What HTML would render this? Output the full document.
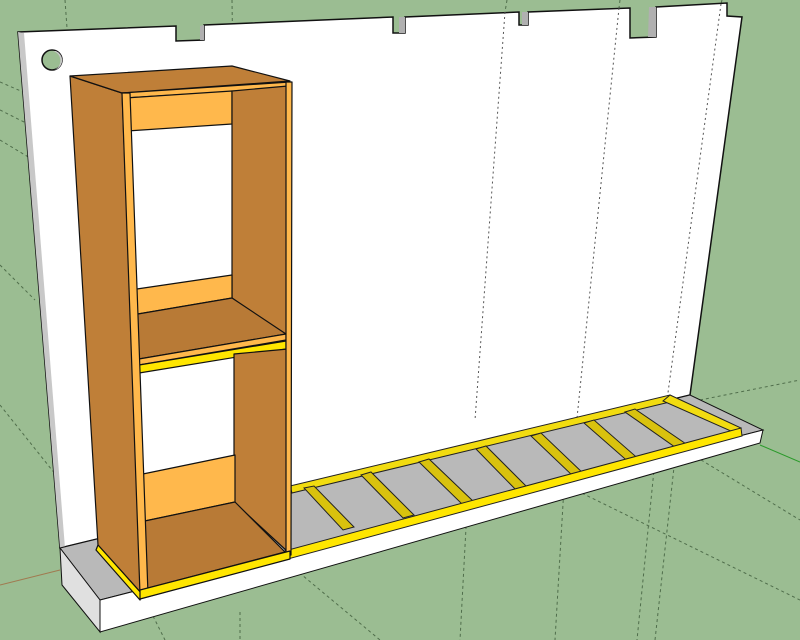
<!DOCTYPE html>
<html><head><meta charset="utf-8"><style>html,body{margin:0;padding:0;background:#9bbd92;}svg{display:block}</style></head>
<body>
<svg width="800" height="640" viewBox="0 0 800 640" xmlns="http://www.w3.org/2000/svg">
<rect width="800" height="640" fill="#9bbd92"/>
<g stroke="#3d5a3a" stroke-width="1" stroke-dasharray="3,3" fill="none" opacity="0.8">
<line x1="65" y1="0" x2="70" y2="70"/>
<line x1="232" y1="0" x2="233" y2="70"/>
<line x1="0" y1="82" x2="30" y2="95"/>
<line x1="0" y1="110" x2="30" y2="125"/>
<line x1="0" y1="140" x2="30" y2="158"/>
<line x1="0" y1="265" x2="35" y2="300"/>
<line x1="0" y1="405" x2="60" y2="480"/>
<line x1="145" y1="600" x2="165" y2="640"/>
<line x1="240" y1="612" x2="240" y2="640"/>
<line x1="290" y1="565" x2="380" y2="640"/>
<line x1="468" y1="490" x2="460" y2="640"/>
<line x1="565" y1="470" x2="555" y2="640"/>
<line x1="655" y1="460" x2="637" y2="640"/>
<line x1="675" y1="458" x2="655" y2="640"/>
<line x1="555" y1="480" x2="800" y2="600"/>
<line x1="660" y1="435" x2="800" y2="520"/>
<line x1="700" y1="400" x2="800" y2="380"/>
<line x1="507" y1="0" x2="505" y2="12"/>
<line x1="620" y1="0" x2="619" y2="8"/>
<line x1="722" y1="0" x2="721" y2="4"/>
</g>
<line x1="0" y1="585" x2="60" y2="570" stroke="#a07a50" stroke-width="1"/>
<line x1="760" y1="445" x2="800" y2="462" stroke="#2a9a2a" stroke-width="1"/>
<!-- wall -->
<polygon points="18,32 176,26 176,41 204,40 204,25 393,17 393,33 405,33 405,17 519,12 519,25 528,25 528,12 630,8 630,38 656,37 656,7 727,3 727,16 742,17 690,395 60,548" fill="#ffffff" stroke="#111" stroke-width="1.5"/>
<polygon points="18,32 24,33 65,548 60,548" fill="#c8c8c8"/>
<polygon points="200,26 204,25 204,40 200,40" fill="#b0b0b0"/>
<polygon points="399,17 405,17 405,33 399,33" fill="#b0b0b0"/>
<polygon points="522,12 528,12 528,25 522,25" fill="#b0b0b0"/>
<polygon points="649,7 656,7 656,37 648,37" fill="#b0b0b0"/>
<g stroke="#555" stroke-width="1" stroke-dasharray="2,3" fill="none">
<line x1="505" y1="12" x2="475" y2="420"/>
<line x1="619" y1="8" x2="577" y2="418"/>
<line x1="721" y1="4" x2="667" y2="400"/>
</g>
<circle cx="52" cy="60" r="10" fill="#9bbd92" stroke="#111" stroke-width="1.5"/>
<path d="M56,51 A10,10 0 0 1 57,69 L54,70 A10,10 0 0 0 53,51 Z" fill="#c8c8c8"/>
<!-- base -->
<polygon points="60,548 690,395 763,430 100,600" fill="#b9b9b9" stroke="#111" stroke-width="1"/>
<polygon points="100,600 763,430 760,443 100,632" fill="#ffffff" stroke="#111" stroke-width="1"/>
<polygon points="60,548 100,600 100,632 62,585" fill="#e0e0e0" stroke="#111" stroke-width="1"/>
<!-- ladder -->
<g stroke="#222" stroke-width="1" fill="#f2dc10">
<polygon points="290,486 670,395 678,400 292,493"/>
<polygon points="670,395 741,428 733,432 663,401"/>
<polygon points="304,488 314,486 354,527 343,530" fill="#d9c20e"/>
<polygon points="361,475 371,472 414,515 403,518" fill="#d9c20e"/>
<polygon points="419,462 429,459 474,502 463,505" fill="#d9c20e"/>
<polygon points="476,449 486,446 529,489 518,492" fill="#d9c20e"/>
<polygon points="531,436 541,433 585,475 575,478" fill="#d9c20e"/>
<polygon points="584,423 594,420 642,462 632,465" fill="#d9c20e"/>
<polygon points="625,412 635,409 692,448 682,452" fill="#d9c20e"/>
<polygon points="140,590 741,428 742,436 140,599" fill="#ffe600"/>
</g>
<!-- cabinet -->
<g stroke="#111" stroke-width="1.2" stroke-linejoin="round">
<polygon points="70,76 122,93 142,594 98,545" fill="#bf7f38"/>
<polygon points="70,76 232,66 290,81 122,93" fill="#bf7f38"/>
<polygon points="122,93 290,82 290,88 124,98" fill="#ffb84c"/>
<polygon points="125,98 232,91 232,124 127,131" fill="#ffb84c"/>
<polygon points="232,91 288,86 288,338 232,298" fill="#bf7f38"/>
<polygon points="130,290 232,275 232,298 132,315" fill="#ffb84c"/>
<polygon points="132,315 232,298 286,334 133,360" fill="#b87a36"/>
<polygon points="133,360 286,334 286,340 133,366" fill="#ffb84c"/>
<polygon points="133,366 286,341 286,349 133,374" fill="#ffe600"/>
<polygon points="234,354 288,349 288,552 234,502" fill="#bf7f38"/>
<polygon points="138,475 235,455 235,502 140,522" fill="#ffb84c"/>
<polygon points="140,522 235,502 285,552 141,590" fill="#b87a36"/>
<polygon points="122,93 130,93 148,594 140,594" fill="#ffb84c"/>
<polygon points="286,82 292,82 291,555 286,555" fill="#ffb84c"/>
<polygon points="98,545 142,594 140,600 96,550" fill="#ffe600"/>
<polygon points="140,590 290,551 290,559 140,599" fill="#ffe600"/>
</g>
</svg>
</body></html>
